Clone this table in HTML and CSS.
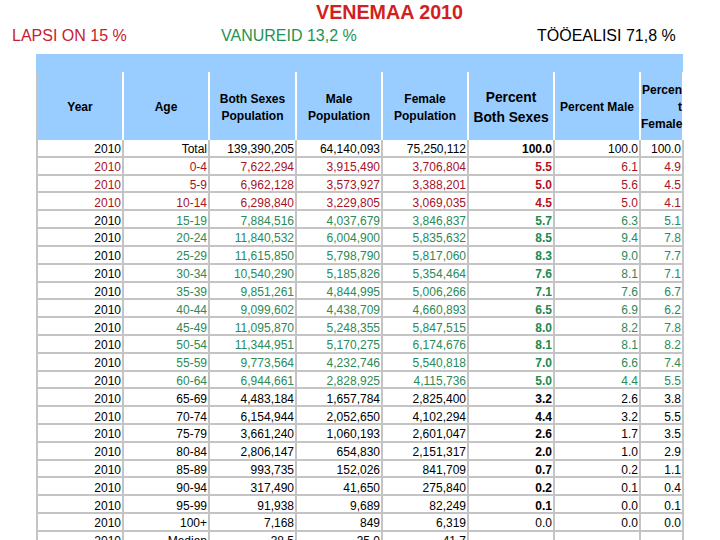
FILE: index.html
```html
<!DOCTYPE html>
<html lang="et">
<head>
<meta charset="utf-8">
<title>VENEMAA 2010</title>
<link rel="stylesheet" href="styles.css">
</head>
<body>
<header class="top">
  <h1 class="title">VENEMAA 2010</h1>
  <div class="labels">
    <span class="lab lab-child">LAPSI ON 15 %</span>
    <span class="lab lab-old">VANUREID 13,2 %</span>
    <span class="lab lab-work">TÖÖEALISI 71,8 %</span>
  </div>
</header>
<div class="sheet">
  <div class="strip"></div>
  <table class="grid">
    <colgroup>
      <col class="c1"><col class="c2"><col class="c3"><col class="c4"><col class="c5"><col class="c6"><col class="c7"><col class="c8">
    </colgroup>
    <thead>
      <tr class="head">
        <th class="first">Year</th>
        <th>Age</th>
        <th>Both Sexes<br>Population</th>
        <th>Male<br>Population</th>
        <th>Female<br>Population</th>
        <th class="big">Percent<br>Both Sexes</th>
        <th>Percent Male</th>
        <th class="narrow">Percen<br>t<br>Female</th>
      </tr>
    </thead>
    <tbody>
      <tr><td class="first">2010</td><td>Total</td><td>139,390,205</td><td>64,140,093</td><td>75,250,112</td><td class="b">100.0</td><td>100.0</td><td>100.0</td></tr>
      <tr class="red"><td class="first">2010</td><td>0-4</td><td>7,622,294</td><td>3,915,490</td><td>3,706,804</td><td class="b">5.5</td><td>6.1</td><td>4.9</td></tr>
      <tr class="red"><td class="first">2010</td><td>5-9</td><td>6,962,128</td><td>3,573,927</td><td>3,388,201</td><td class="b">5.0</td><td>5.6</td><td>4.5</td></tr>
      <tr class="red"><td class="first">2010</td><td>10-14</td><td>6,298,840</td><td>3,229,805</td><td>3,069,035</td><td class="b">4.5</td><td>5.0</td><td>4.1</td></tr>
      <tr class="green"><td class="first">2010</td><td>15-19</td><td>7,884,516</td><td>4,037,679</td><td>3,846,837</td><td class="b">5.7</td><td>6.3</td><td>5.1</td></tr>
      <tr class="green"><td class="first">2010</td><td>20-24</td><td>11,840,532</td><td>6,004,900</td><td>5,835,632</td><td class="b">8.5</td><td>9.4</td><td>7.8</td></tr>
      <tr class="green"><td class="first">2010</td><td>25-29</td><td>11,615,850</td><td>5,798,790</td><td>5,817,060</td><td class="b">8.3</td><td>9.0</td><td>7.7</td></tr>
      <tr class="green"><td class="first">2010</td><td>30-34</td><td>10,540,290</td><td>5,185,826</td><td>5,354,464</td><td class="b">7.6</td><td>8.1</td><td>7.1</td></tr>
      <tr class="green"><td class="first">2010</td><td>35-39</td><td>9,851,261</td><td>4,844,995</td><td>5,006,266</td><td class="b">7.1</td><td>7.6</td><td>6.7</td></tr>
      <tr class="green"><td class="first">2010</td><td>40-44</td><td>9,099,602</td><td>4,438,709</td><td>4,660,893</td><td class="b">6.5</td><td>6.9</td><td>6.2</td></tr>
      <tr class="green"><td class="first">2010</td><td>45-49</td><td>11,095,870</td><td>5,248,355</td><td>5,847,515</td><td class="b">8.0</td><td>8.2</td><td>7.8</td></tr>
      <tr class="green"><td class="first">2010</td><td>50-54</td><td>11,344,951</td><td>5,170,275</td><td>6,174,676</td><td class="b">8.1</td><td>8.1</td><td>8.2</td></tr>
      <tr class="green"><td class="first">2010</td><td>55-59</td><td>9,773,564</td><td>4,232,746</td><td>5,540,818</td><td class="b">7.0</td><td>6.6</td><td>7.4</td></tr>
      <tr class="green"><td class="first">2010</td><td>60-64</td><td>6,944,661</td><td>2,828,925</td><td>4,115,736</td><td class="b">5.0</td><td>4.4</td><td>5.5</td></tr>
      <tr><td class="first">2010</td><td>65-69</td><td>4,483,184</td><td>1,657,784</td><td>2,825,400</td><td class="b">3.2</td><td>2.6</td><td>3.8</td></tr>
      <tr><td class="first">2010</td><td>70-74</td><td>6,154,944</td><td>2,052,650</td><td>4,102,294</td><td class="b">4.4</td><td>3.2</td><td>5.5</td></tr>
      <tr><td class="first">2010</td><td>75-79</td><td>3,661,240</td><td>1,060,193</td><td>2,601,047</td><td class="b">2.6</td><td>1.7</td><td>3.5</td></tr>
      <tr><td class="first">2010</td><td>80-84</td><td>2,806,147</td><td>654,830</td><td>2,151,317</td><td class="b">2.0</td><td>1.0</td><td>2.9</td></tr>
      <tr><td class="first">2010</td><td>85-89</td><td>993,735</td><td>152,026</td><td>841,709</td><td class="b">0.7</td><td>0.2</td><td>1.1</td></tr>
      <tr><td class="first">2010</td><td>90-94</td><td>317,490</td><td>41,650</td><td>275,840</td><td class="b">0.2</td><td>0.1</td><td>0.4</td></tr>
      <tr><td class="first">2010</td><td>95-99</td><td>91,938</td><td>9,689</td><td>82,249</td><td class="b">0.1</td><td>0.0</td><td>0.1</td></tr>
      <tr><td class="first">2010</td><td>100+</td><td>7,168</td><td>849</td><td>6,319</td><td>0.0</td><td>0.0</td><td>0.0</td></tr>
      <tr><td class="first">2010</td><td>Median</td><td>38.5</td><td>35.0</td><td>41.7</td><td></td><td></td><td></td></tr>
    </tbody>
  </table>
</div>
</body>
</html>
```

FILE: styles.css
```css
html, body {
  margin: 0;
  padding: 0;
  background: #ffffff;
}
body {
  font-family: "Liberation Sans", Arial, sans-serif;
  color: #000;
  width: 720px;
  height: 540px;
  overflow: hidden;
}
.top {
  display: flex;
  flex-direction: column;
}
.title {
  margin: 0;
  padding: 1px 0 0 316px;
  height: 25px;
  box-sizing: border-box;
  font-size: 19.7px;
  line-height: 23px;
  font-weight: bold;
  color: #d21f22;
}
.labels {
  display: grid;
  grid-template-columns: 221px 316px 1fr;
  height: 29px;
  padding-top: 2px;
  box-sizing: border-box;
  font-size: 16px;
  line-height: 18px;
}
.lab-child {
  padding-left: 12px;
  color: #c8202c;
}
.lab-old {
  color: #1e9354;
}
.lab-work {
  color: #000;
}
.sheet {
  margin-left: 36px;
  width: 648px;
}
.strip {
  height: 18px;
  width: 647px;
  background: #99ccff;
}
.grid {
  border-collapse: separate;
  border-spacing: 0;
  table-layout: fixed;
  width: 648px;
  font-size: 12px;
}
.c1 { width: 88px; }
.c2 { width: 86px; }
.c3 { width: 87px; }
.c4 { width: 86px; }
.c5 { width: 86px; }
.c6 { width: 86px; }
.c7 { width: 86px; }
.c8 { width: 43px; }
.grid tr.head {
  height: 68px;
}
.grid th {
  padding: 3px 0 0 0;
  background: #99ccff;
  border-right: 2px solid #ffffff;
  font-weight: bold;
  font-size: 12px;
  line-height: 16.5px;
  text-align: center;
  vertical-align: middle;
  color: #000;
}
.grid th.first {
  border-left: 2px solid #c4c4c4;
}
.grid th.big {
  font-size: 13.8px;
  line-height: 20px;
}
.grid th.narrow {
  line-height: 17px;
  white-space: nowrap;
  text-align: right;
}
.grid tbody tr {
  height: 17.82px;
}
.grid td {
  padding: 3px 1px 0 0;
  border-right: 2px solid #c4c4c4;
  border-bottom: 2px solid #c4c4c4;
  text-align: right;
  vertical-align: middle;
  line-height: 12px;
  white-space: nowrap;
  overflow: hidden;
}
.grid td.first {
  border-left: 2px solid #c4c4c4;
}
.grid td.b {
  font-weight: bold;
}
.red td {
  color: #a5141f;
}
.red td.b {
  color: #b8121c;
}
.green td {
  color: #2a8a58;
}
.green td.b {
  color: #1b8a4a;
}
.green td.first {
  color: #000;
}
```
